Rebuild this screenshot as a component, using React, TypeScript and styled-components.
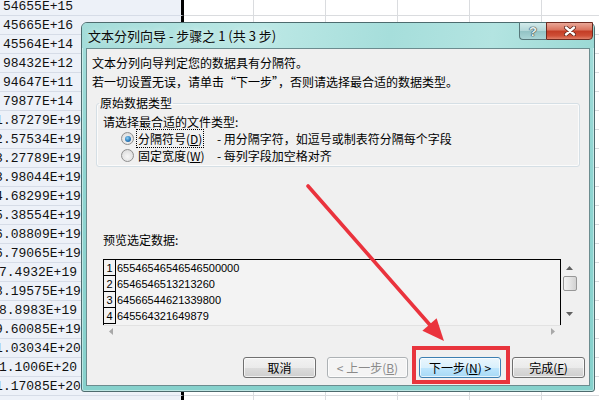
import styled, { createGlobalStyle } from "styled-components";

const GlobalStyle = createGlobalStyle`
  html, body {
    margin: 0;
    padding: 0;
  }
  body {
    width: 599px;
    height: 400px;
    overflow: hidden;
    background: #ffffff;
    color: #000;
    font-family: "Noto Sans CJK SC", "Liberation Sans", sans-serif;
  }
`;

// values in the column behind the dialog (Excel shows them centred, so both ends clip)
const cellValues = [
  "54655E+15",
  "45665E+16",
  "45564E+14",
  "98432E+12",
  "94647E+11",
  "79877E+14",
  "1.87279E+19",
  "2.57534E+19",
  "3.27789E+19",
  "3.98044E+19",
  "4.68299E+19",
  "5.38554E+19",
  "6.08809E+19",
  "6.79065E+19",
  "7.4932E+19",
  "8.19575E+19",
  "8.8983E+19",
  "9.60085E+19",
  "1.03034E+20",
  "1.1006E+20",
  "1.17085E+20",
  "",
];

const gridWidths = [70, 72, 72, 72, 72, 72];

const previewRows = [
  "65546546546546500000",
  "6546546513213260",
  "64566544621339800",
  "645564321649879",
];

const App = () => {
  return (
    <>
      <GlobalStyle />
      <Screen>
        <Sheet>
          {cellValues.map((v, i) => (
            <SheetRow key={i}>
              <ValueCell>
                <ValueText>{v}</ValueText>
              </ValueCell>
              {gridWidths.map((w, j) => (
                <GridCell key={j} $w={w} />
              ))}
            </SheetRow>
          ))}
        </Sheet>

        <Dialog>
          <TitleBar>
            <Title>文本分列向导 - 步骤之 1 (共 3 步)</Title>
            <CaptionButtons>
              <HelpButton>?</HelpButton>
              <CloseButton>
                <svg width="12" height="10" viewBox="0 0 12 10">
                  <path d="M2 1.5 L10 8.5 M10 1.5 L2 8.5" stroke="#5b231a" strokeWidth="4" strokeLinecap="round" />
                  <path d="M2 1.5 L10 8.5 M10 1.5 L2 8.5" stroke="#ffffff" strokeWidth="2.4" strokeLinecap="round" />
                </svg>
              </CloseButton>
            </CaptionButtons>
          </TitleBar>

          <Client>
            <Intro>
              <Line>文本分列向导判定您的数据具有分隔符。</Line>
              <Line>若一切设置无误，请单击“下一步”，否则请选择最合适的数据类型。</Line>
            </Intro>

            <GroupBox>
              <GroupLegend>原始数据类型</GroupLegend>
              <Prompt>请选择最合适的文件类型:</Prompt>
              <RadioRow>
                <Radio $checked />
                <RadioLabel>
                  <LabelText $focused>
                    分隔符号(<Key>D</Key>)
                  </LabelText>
                </RadioLabel>
                <Hint>- 用分隔字符，如逗号或制表符分隔每个字段</Hint>
              </RadioRow>
              <RadioRow>
                <Radio />
                <RadioLabel>
                  <LabelText>
                    固定宽度(<Key>W</Key>)
                  </LabelText>
                </RadioLabel>
                <Hint>- 每列字段加空格对齐</Hint>
              </RadioRow>
            </GroupBox>

            <PreviewLabel>预览选定数据:</PreviewLabel>
            <Preview>
              <PreviewTop>
                <PreviewBox>
                  {previewRows.map((r, i) => (
                    <PreviewRow key={i}>
                      <RowNum>{i + 1}</RowNum>
                      <RowData>{r}</RowData>
                    </PreviewRow>
                  ))}
                </PreviewBox>
                <VScroll>
                  <svg width="7" height="4" viewBox="0 0 7 4">
                    <path d="M0 4 L3.5 0 L7 4 Z" fill="#606060" />
                  </svg>
                  <Thumb />
                  <svg width="7" height="4" viewBox="0 0 7 4">
                    <path d="M0 0 L3.5 4 L7 0 Z" fill="#606060" />
                  </svg>
                </VScroll>
              </PreviewTop>
              <HScroll>
                <svg width="4" height="7" viewBox="0 0 4 7">
                  <path d="M4 0 L0 3.5 L4 7 Z" fill="#a8a8a8" />
                </svg>
                <svg width="4" height="7" viewBox="0 0 4 7">
                  <path d="M0 0 L4 3.5 L0 7 Z" fill="#a8a8a8" />
                </svg>
              </HScroll>
            </Preview>

            <ButtonRow>
              <Button $w={73}>取消</Button>
              <Button $w={81} $variant="disabled">
                &lt; 上一步(<Key>B</Key>)
              </Button>
              <Button $w={82} $variant="focused">
                下一步(<Key>N</Key>) &gt;
              </Button>
              <Button $w={73}>
                完成(<Key>F</Key>)
              </Button>
            </ButtonRow>
          </Client>
        </Dialog>

        <Arrow width="599" height="400" viewBox="0 0 599 400">
          <line x1="308" y1="186" x2="430" y2="325" stroke="#ea333d" strokeWidth="3.6" strokeLinecap="round" />
          <polygon points="444,341 422.4,330.8 436.6,318.2" fill="#ea333d" />
        </Arrow>
        <Highlight />
      </Screen>
    </>
  );
};

export default App;

const Screen = styled.div`
  position: relative;
  width: 599px;
  height: 400px;
  overflow: hidden;
`;

const Sheet = styled.div`
  display: flex;
  flex-direction: column;
  margin-top: -3px;
`;

const SheetRow = styled.div`
  display: flex;
  height: 19px;
  flex: none;
`;

const ValueCell = styled.div`
  width: 184px;
  flex: none;
  box-sizing: border-box;
  background: #edf1f8;
  border-bottom: 1px solid #d6dce7;
  border-right: 3px solid #000;
  display: flex;
  align-items: flex-end;
`;

const ValueText = styled.div`
  width: 76px;
  display: flex;
  justify-content: center;
  white-space: nowrap;
  font-family: "Liberation Mono", monospace;
  font-size: 13px;
  line-height: 17px;
  color: #111;
`;

const GridCell = styled.div<{ $w: number }>`
  width: ${(p) => p.$w}px;
  flex: none;
  box-sizing: border-box;
  border-right: 1px solid #dadcdf;
  border-bottom: 1px solid #dadcdf;
  background: #fff;
`;

const Dialog = styled.div`
  position: absolute;
  left: 81px;
  top: 22px;
  width: 514px;
  height: 370px;
  box-sizing: border-box;
  border: 1px solid #4d6b6e;
  border-radius: 6px 6px 3px 3px;
  background: linear-gradient(180deg, #a4dedb 0%, #8fd5d1 40%, #86d1cc 100%);
  box-shadow: inset 0 0 0 1px rgba(255, 255, 255, 0.45);
  display: flex;
  flex-direction: column;
`;

const TitleBar = styled.div`
  height: 25px;
  flex: none;
  display: flex;
  align-items: flex-start;
  padding-left: 6px;
  border-radius: 5px 5px 0 0;
  background: linear-gradient(100deg, #a3dcd9 0%, #bce8e5 35%, #a6dedb 60%, #b3e4e1 80%, #9bd9d5 100%);
`;

const Title = styled.div`
  font-size: 13px;
  line-height: 25px;
  color: #0a0a0a;
  text-shadow: 0 0 6px rgba(255, 255, 255, 0.8);
`;

const CaptionButtons = styled.div`
  display: flex;
  margin-left: auto;
  margin-right: 1px;
  margin-top: -1px;
`;

const HelpButton = styled.div`
  width: 27px;
  height: 18px;
  box-sizing: border-box;
  border: 1px solid #57777a;
  border-right: none;
  border-radius: 0 0 0 4px;
  background: linear-gradient(180deg, #d3ebeb 0%, #b3d7d8 48%, #93c3c5 52%, #aad5d6 100%);
  display: flex;
  align-items: center;
  justify-content: center;
  font-family: "Liberation Sans", sans-serif;
  font-weight: bold;
  font-size: 13px;
  color: #e9f2f2;
  text-shadow: 0 0 1px #2b3d42, 0 0 1px #2b3d42, 0 0 1px #2b3d42;
`;

const CloseButton = styled.div`
  width: 47px;
  height: 18px;
  box-sizing: border-box;
  border: 1px solid #6e2a20;
  border-radius: 0 0 4px 0;
  background: linear-gradient(180deg, #e9a797 0%, #db7560 42%, #c43d26 52%, #cf4f37 80%, #e08069 100%);
  display: flex;
  align-items: center;
  justify-content: center;
`;

const Client = styled.div`
  flex: 1;
  margin: 0 4px 5px 4px;
  border: 1px solid #6c8c8f;
  background: #f0f0f0;
  display: flex;
  flex-direction: column;
  padding: 4px 4px 0 0;
  font-size: 12px;
`;

const Intro = styled.div`
  padding-left: 5px;
`;

const Line = styled.div`
  line-height: 19px;
  white-space: nowrap;
`;

const GroupBox = styled.fieldset`
  margin: 4px 5px 0 9px;
  padding: 2px 0 2px 0;
  border: 1px solid #d5dfe5;
  border-radius: 3px;
  min-width: 0;
  box-shadow: inset 0 0 0 1px #fbfbfb;
`;

const GroupLegend = styled.legend`
  margin-left: 2px;
  padding: 0 1px;
  line-height: 16px;
`;

const Prompt = styled.div`
  margin-left: 6px;
  line-height: 17px;
`;

const RadioRow = styled.div`
  display: flex;
  align-items: center;
  height: 17px;
  padding-left: 24px;
`;

const Radio = styled.div<{ $checked?: boolean }>`
  position: relative;
  width: 13px;
  height: 13px;
  box-sizing: border-box;
  border-radius: 50%;
  border: 1px solid #8f8f8f;
  background: radial-gradient(circle at 50% 60%, #f6f6f6 0%, #e3e3e3 60%, #cfcfcf 100%);
  margin-right: 3px;
  flex: none;

  &::after {
    content: "";
    display: ${(p) => (p.$checked ? "block" : "none")};
    position: absolute;
    left: 2.5px;
    top: 2.5px;
    width: 6px;
    height: 6px;
    border-radius: 50%;
    background: radial-gradient(circle at 40% 35%, #8cd0f4 0%, #2d7cbc 55%, #1a4f86 100%);
  }
`;

const RadioLabel = styled.div`
  width: 80px;
  flex: none;
`;

const LabelText = styled.span<{ $focused?: boolean }>`
  padding: 0 1px;
  outline: ${(p) => (p.$focused ? "1px dotted #000" : "none")};
  white-space: nowrap;
`;

const Key = styled.span`
  text-decoration: underline;
`;

const Hint = styled.div`
  white-space: nowrap;
`;

const PreviewLabel = styled.div`
  margin: 64px 0 0 16px;
  line-height: 18px;
`;

const Preview = styled.div`
  margin: 10px 0 0 16px;
  width: 475px;
`;

const PreviewTop = styled.div`
  display: flex;
`;

const PreviewBox = styled.div`
  width: 458px;
  height: 66px;
  box-sizing: border-box;
  border: 1px solid #000;
  border-bottom: none;
  background: #f3f3f3;
  overflow: hidden;
`;

const PreviewRow = styled.div`
  display: flex;
  height: 16px;
`;

const RowNum = styled.div`
  width: 12px;
  flex: none;
  box-sizing: border-box;
  border-right: 1px solid #000;
  border-bottom: 1px solid #000;
  display: flex;
  align-items: flex-end;
  justify-content: center;
  font-family: "Liberation Sans", sans-serif;
  font-size: 11px;
  line-height: 13px;
`;

const RowData = styled.div`
  padding-left: 1px;
  font-family: "Liberation Sans", sans-serif;
  font-size: 11px;
  line-height: 17px;
  white-space: nowrap;
`;

const VScroll = styled.div`
  width: 17px;
  height: 66px;
  flex: none;
  display: flex;
  flex-direction: column;
  align-items: center;
  padding-top: 7px;
  box-sizing: border-box;
  background: #f0f0f0;

  svg:last-child {
    margin-top: 21px;
  }
`;

const Thumb = styled.div`
  margin-top: 6px;
  width: 14px;
  height: 15px;
  box-sizing: border-box;
  border: 1px solid #979797;
  border-radius: 2px;
  background: linear-gradient(90deg, #f2f2f2 0%, #e4e4e4 50%, #d2d2d2 100%);
`;

const HScroll = styled.div`
  width: 458px;
  height: 12px;
  box-sizing: border-box;
  border-top: 1px solid #e2e2e2;
  display: flex;
  align-items: center;
  justify-content: space-between;
  padding: 0 6px;
`;

const ButtonRow = styled.div`
  margin-top: auto;
  display: flex;
  justify-content: flex-end;
  gap: 11px;
  padding-bottom: 7px;
`;

const Button = styled.div<{ $w: number; $variant?: "disabled" | "focused" }>`
  width: ${(p) => p.$w}px;
  height: 21px;
  box-sizing: border-box;
  display: flex;
  align-items: center;
  justify-content: center;
  white-space: nowrap;
  font-size: 12px;
  border-radius: 3px;
  border: 1px solid
    ${(p) => (p.$variant === "disabled" ? "#adb2b5" : p.$variant === "focused" ? "#3c7fb1" : "#707070")};
  color: ${(p) => (p.$variant === "disabled" ? "#8a8a8a" : "#000")};
  background: ${(p) =>
    p.$variant === "disabled"
      ? "#f4f4f4"
      : p.$variant === "focused"
      ? "linear-gradient(180deg, #eaf6fd 0%, #d9f0fc 50%, #bee6fd 51%, #a7d9f5 100%)"
      : "linear-gradient(180deg, #f2f2f2 0%, #ebebeb 50%, #dddddd 51%, #cfcfcf 100%)"};
  box-shadow: inset 0 0 0 1px rgba(255, 255, 255, 0.7);
`;

const Arrow = styled.svg`
  position: absolute;
  left: 0;
  top: 0;
  pointer-events: none;
`;

const Highlight = styled.div`
  position: absolute;
  left: 412px;
  top: 346px;
  width: 98px;
  height: 38px;
  box-sizing: border-box;
  border: 4px solid #e8343d;
  pointer-events: none;
`;
